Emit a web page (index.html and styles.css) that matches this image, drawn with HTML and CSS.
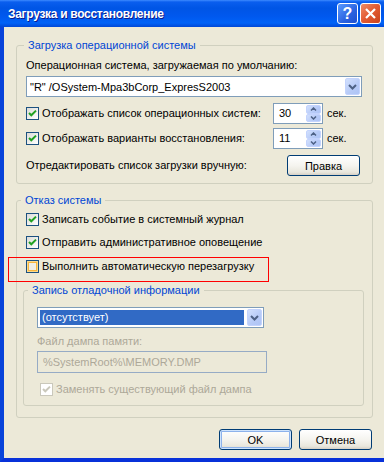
FILE: index.html
```html
<!DOCTYPE html>
<html lang="ru">
<head>
    <meta charset="UTF-8">
    <meta name="viewport" content="width=device-width, initial-scale=1.0">
    <title>Загрузка и восстановление</title>
    <link rel="stylesheet" href="styles.css">
</head>
<body>
    <div class="window">
        <div class="titlebar">
            <span class="title">Загрузка и восстановление</span>
            <span class="tb-btn help">?</span>
            <span class="tb-btn close">
                <svg width="13" height="13" viewBox="0 0 13 13"><path d="M2 2 L11 11 M11 2 L2 11" stroke="#fff" stroke-width="2.2" fill="none"/></svg>
            </span>
        </div>

        <div class="dialog">
            <!-- Загрузка операционной системы -->
            <fieldset class="group boot">
                <legend>Загрузка операционной системы</legend>
                <div class="group-body">
                    <div class="text">Операционная система, загружаемая по умолчанию:</div>
                    <div class="combo os-combo">
                        <span class="combo-value">"R" /OSystem-Mpa3bCorp_ExpresS2003</span>
                        <span class="combo-arrow"><svg width="9" height="6" viewBox="0 0 9 6"><path d="M1 1 L4.5 4.5 L8 1" stroke="#4D6185" stroke-width="2" fill="none"/></svg></span>
                    </div>
                    <div class="row timer first">
                        <span class="check on"><svg width="11" height="11" viewBox="0 0 11 11"><path d="M2 5 L4.3 7.3 L9 2.6" stroke="#21A121" stroke-width="2" fill="none"/></svg></span>
                        <span class="label">Отображать список операционных систем:</span>
                        <span class="spin">
                            <span class="spin-value">30</span>
                            <span class="spin-btns">
                                <span class="spin-btn"><svg width="7" height="4" viewBox="0 0 7 4"><path d="M1 3.5 L3.5 1 L6 3.5" stroke="#4D6185" stroke-width="1.5" fill="none"/></svg></span>
                                <span class="spin-btn"><svg width="7" height="4" viewBox="0 0 7 4"><path d="M1 0.5 L3.5 3 L6 0.5" stroke="#4D6185" stroke-width="1.5" fill="none"/></svg></span>
                            </span>
                        </span>
                        <span class="unit">сек.</span>
                    </div>
                    <div class="row timer">
                        <span class="check on"><svg width="11" height="11" viewBox="0 0 11 11"><path d="M2 5 L4.3 7.3 L9 2.6" stroke="#21A121" stroke-width="2" fill="none"/></svg></span>
                        <span class="label">Отображать варианты восстановления:</span>
                        <span class="spin">
                            <span class="spin-value">11</span>
                            <span class="spin-btns">
                                <span class="spin-btn"><svg width="7" height="4" viewBox="0 0 7 4"><path d="M1 3.5 L3.5 1 L6 3.5" stroke="#4D6185" stroke-width="1.5" fill="none"/></svg></span>
                                <span class="spin-btn"><svg width="7" height="4" viewBox="0 0 7 4"><path d="M1 0.5 L3.5 3 L6 0.5" stroke="#4D6185" stroke-width="1.5" fill="none"/></svg></span>
                            </span>
                        </span>
                        <span class="unit">сек.</span>
                    </div>
                    <div class="row edit">
                        <span class="label">Отредактировать список загрузки вручную:</span>
                        <button class="btn edit-btn" type="button">Правка</button>
                    </div>
                </div>
            </fieldset>

            <!-- Отказ системы -->
            <fieldset class="group failure">
                <legend>Отказ системы</legend>
                <div class="group-body">
                    <div class="row opt first">
                        <span class="check on"><svg width="11" height="11" viewBox="0 0 11 11"><path d="M2 5 L4.3 7.3 L9 2.6" stroke="#21A121" stroke-width="2" fill="none"/></svg></span>
                        <span class="label">Записать событие в системный журнал</span>
                    </div>
                    <div class="row opt">
                        <span class="check on"><svg width="11" height="11" viewBox="0 0 11 11"><path d="M2 5 L4.3 7.3 L9 2.6" stroke="#21A121" stroke-width="2" fill="none"/></svg></span>
                        <span class="label">Отправить административное оповещение</span>
                    </div>
                    <div class="row opt marked">
                        <span class="check hover"></span>
                        <span class="label">Выполнить автоматическую перезагрузку</span>
                    </div>

                    <fieldset class="group debug">
                        <legend>Запись отладочной информации</legend>
                        <div class="group-body">
                            <div class="combo dump-combo">
                                <span class="combo-value selected">(отсутствует)</span>
                                <span class="combo-arrow"><svg width="9" height="6" viewBox="0 0 9 6"><path d="M1 1 L4.5 4.5 L8 1" stroke="#4D6185" stroke-width="2" fill="none"/></svg></span>
                            </div>
                            <div class="text disabled dump-label">Файл дампа памяти:</div>
                            <div class="field">%SystemRoot%\MEMORY.DMP</div>
                            <div class="row opt overwrite">
                                <span class="check off"><svg width="11" height="11" viewBox="0 0 11 11"><path d="M2 5 L4.3 7.3 L9 2.6" stroke="#CAC8BB" stroke-width="2" fill="none"/></svg></span>
                                <span class="label disabled">Заменять существующий файл дампа</span>
                            </div>
                        </div>
                    </fieldset>
                </div>
            </fieldset>

            <div class="actions">
                <button class="btn default" type="button">OK</button>
                <button class="btn" type="button">Отмена</button>
            </div>
        </div>
    </div>
</body>
</html>
```

FILE: styles.css
```css
body {
    margin: 0;
    overflow: hidden;
    background-color: #ECE9D8;
    font-family: "Liberation Sans", Arial, sans-serif;
    font-size: 11px;
    color: #000;
}

.window {
    width: 384px;
    height: 462px;
    display: flex;
    flex-direction: column;
}

/* Заголовок окна */
.titlebar {
    height: 27px;
    flex: none;
    display: flex;
    align-items: center;
    padding: 0 3px 0 8px;
    background: linear-gradient(#3D8BFF 0, #0A5EEE 2px, #0055E5 8px, #0058EE 16px, #0062F7 23px, #0047D6 27px);
}

.title {
    flex: 1;
    color: #fff;
    font-weight: bold;
    font-size: 12px;
    letter-spacing: -0.3px;
    text-shadow: 1px 1px #0F1A8A;
}

.tb-btn {
    width: 21px;
    height: 21px;
    box-sizing: border-box;
    border: 1px solid #fff;
    border-radius: 3px;
    display: flex;
    align-items: center;
    justify-content: center;
    margin-left: 2px;
}

.help {
    background: linear-gradient(135deg, #5A9BFF, #2A62E0 60%, #1E4FCF);
    color: #fff;
    font-weight: bold;
    font-size: 16px;
}

.close {
    background: linear-gradient(135deg, #F08C66, #E25A32 50%, #C8421C);
}

.dialog {
    flex: 1;
    border-left: 4px solid #0843DA;
    border-bottom: 4px solid #0831D9;
    padding: 12px 11px 0 12px;
}

/* Группы */
.group {
    margin: 0;
    padding: 0;
    min-width: 0;
    border: 1px solid #D0D0BF;
    border-radius: 3px;
}

.group legend {
    margin-left: 7px;
    padding: 0 4px;
    color: #0046D5;
    line-height: 13px;
}

.boot .group-body {
    padding: 7px 10px 7px 9px;
}

.failure {
    margin-top: 10px;
}

.failure legend {
    margin-left: 4px;
}

.failure .group-body {
    padding: 6px 8px 11px 6px;
}

.failure .opt {
    margin-left: 3px;
}

.debug {
    margin-top: 11px;
}

.debug legend {
    margin-left: 4px;
}

.debug .group-body {
    padding: 10px 13px 9px 13px;
}

.text {
    line-height: 13px;
}

.disabled {
    color: #ACA899;
}

.row {
    display: flex;
    align-items: center;
}

.row .label {
    line-height: 13px;
    white-space: nowrap;
}

.timer {
    height: 21px;
    margin-top: 4px;
}

.timer.first {
    margin-top: 6px;
}

.timer .label {
    flex: 1;
}

.edit {
    height: 21px;
    margin-top: 6px;
    justify-content: space-between;
}

.edit-btn {
    margin-right: 2px;
}

.opt {
    height: 13px;
    margin-top: 10px;
}

.opt.first {
    margin-top: 0;
}

.opt.marked {
    margin-top: 11px;
    position: relative;
}

.opt.marked::after {
    content: "";
    position: absolute;
    left: -18px;
    top: -3px;
    width: 261px;
    height: 25px;
    box-sizing: border-box;
    border: 1px solid #F00;
}

/* Флажки */
.check {
    width: 13px;
    height: 13px;
    box-sizing: border-box;
    border: 1px solid #1C5180;
    background: linear-gradient(135deg, #DCDCD7, #FFFFFF);
    margin-right: 3px;
    flex: none;
    display: flex;
}

.check.hover {
    background: #F1EFE5;
    box-shadow: inset 0 0 0 1px #FCDA8C, inset 0 0 0 2px #F8B73E;
}

.check.off {
    border-color: #CAC8BB;
    background: #FFFFFF;
}

/* Списки и поля */
.combo {
    height: 21px;
    box-sizing: border-box;
    display: flex;
    align-items: center;
    padding: 1px;
    border: 1px solid #7F9DB9;
    background: #fff;
}

.os-combo {
    margin-top: 4px;
}

.combo-value {
    flex: 1;
    padding-left: 2px;
    white-space: nowrap;
    overflow: hidden;
}

.combo-value.selected {
    height: 15px;
    line-height: 15px;
    margin: 0 3px 0 1px;
    background: #316AC5;
    color: #fff;
}

.combo-arrow {
    width: 15px;
    height: 17px;
    box-sizing: border-box;
    border: 1px solid #C3D3FD;
    border-radius: 2px;
    background: linear-gradient(135deg, #D2E0FD, #B6CAF7 60%, #AEC4F5);
    display: flex;
    align-items: center;
    justify-content: center;
}

.dump-combo {
    width: 227px;
}

.dump-label {
    margin-top: 7px;
}

.field {
    width: 230px;
    height: 22px;
    box-sizing: border-box;
    margin-top: 3px;
    padding-left: 5px;
    border: 1px solid #96ABC5;
    line-height: 20px;
    color: #ACA899;
}

.overwrite {
    margin-top: 10px;
    margin-left: 1px;
}

.spin {
    width: 50px;
    height: 21px;
    box-sizing: border-box;
    display: flex;
    padding: 1px;
    border: 1px solid #7F9DB9;
    background: #fff;
}

.spin-value {
    flex: 1;
    padding-left: 4px;
    line-height: 17px;
}

.spin-btns {
    width: 15px;
    display: flex;
    flex-direction: column;
}

.spin-btn {
    flex: 1;
    box-sizing: border-box;
    border: 1px solid #C3D3FD;
    border-radius: 2px;
    background: linear-gradient(135deg, #D2E0FD, #B6CAF7 60%, #AEC4F5);
    display: flex;
    align-items: center;
    justify-content: center;
}

.unit {
    width: 35px;
    margin-left: 4px;
    line-height: 13px;
}

/* Кнопки */
.btn {
    width: 73px;
    height: 21px;
    padding: 0;
    box-sizing: border-box;
    border: 1px solid #003C74;
    border-radius: 3px;
    background: linear-gradient(#FFFFFF, #F5F4EF 50%, #E9E7DD 85%, #D6D0C5);
    font-family: inherit;
    font-size: 11px;
    color: #000;
}

.btn.default {
    box-shadow: inset 0 0 0 1px #CEE3FC, inset 0 0 0 2px #8DB2EB;
}

.actions {
    display: flex;
    justify-content: flex-end;
    gap: 7px;
    margin-top: 11px;
    padding-right: 1px;
}
```
